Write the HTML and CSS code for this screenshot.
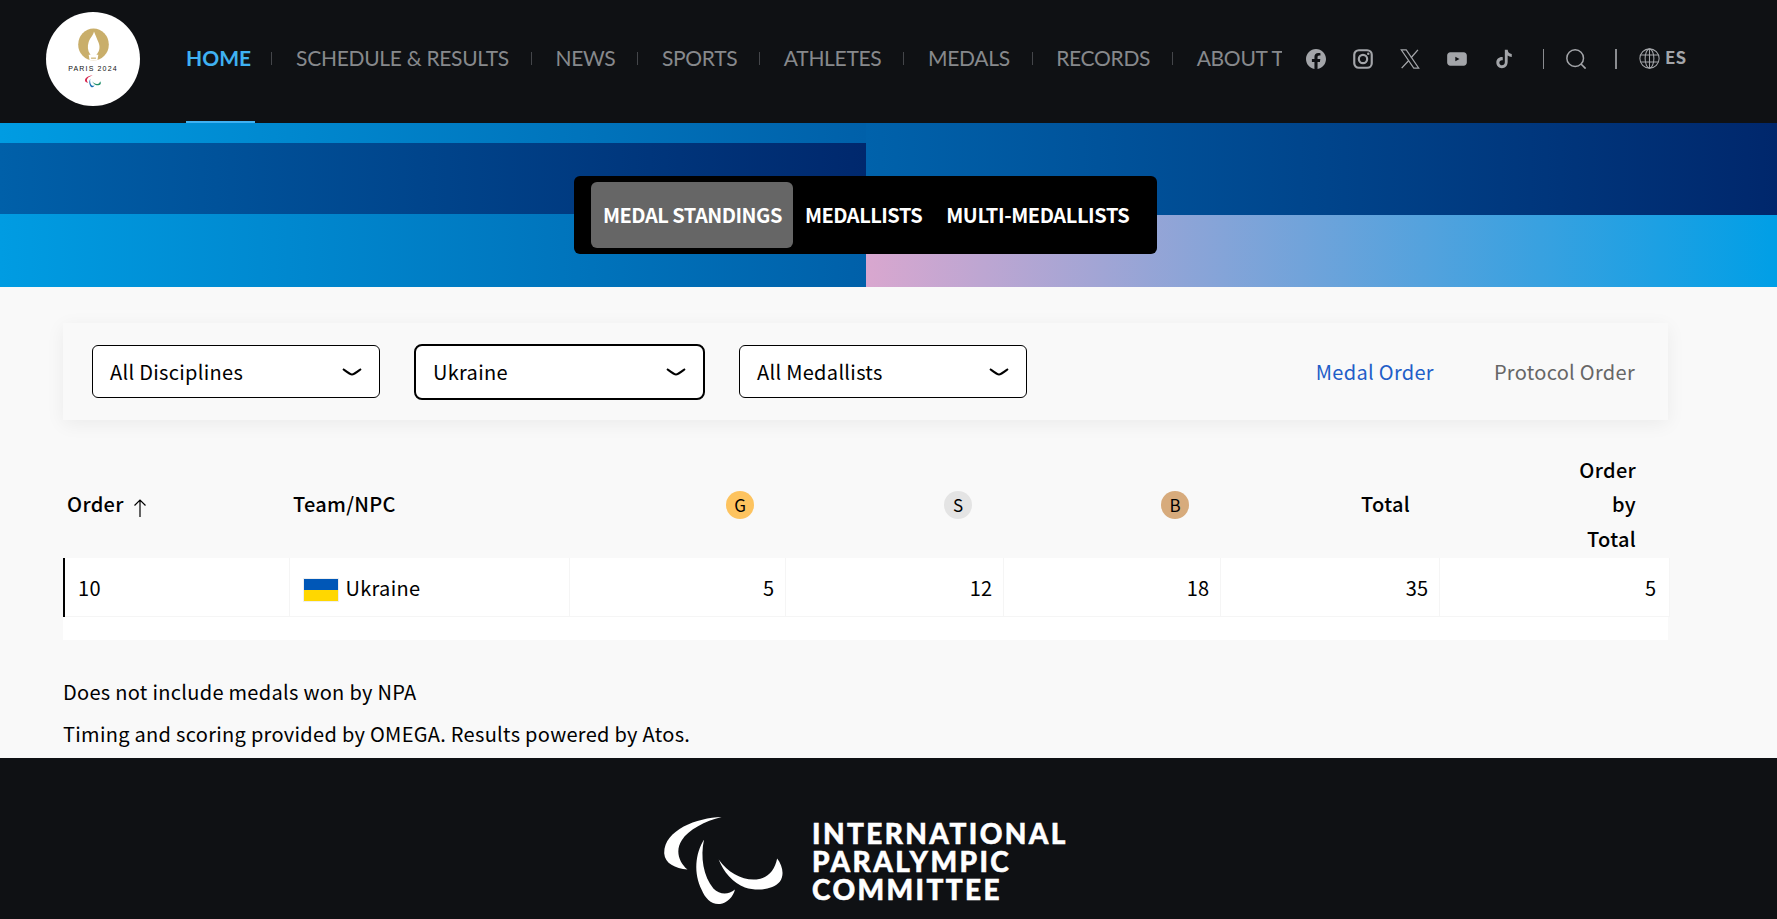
FILE: index.html
```html
<!DOCTYPE html>
<html lang="en">
<head>
<meta charset="utf-8">
<title>Medal Standings</title>
<link rel="stylesheet" href="styles.css">
</head>
<body>
<header class="topbar">
  <a class="logo">
    <svg class="logo-flame" viewBox="0 0 32 33"><ellipse cx="16" cy="16.500" rx="15.800" ry="16.500" fill="#c9ae6a"/><path fill="#fff" d="M16.500 3C16 7 12.500 9 11 14C9.500 19 10 23 12.500 26.500C14 28.500 18 28.500 19.500 26.500C22.500 23 23 18.500 21 14C19.500 10 18 7 16.500 3Z"/><path fill="#fff" d="M11 27h10l-1 6h-8Z"/><path fill="#c9ae6a" d="M13.500 30h5v1.200h-5Z"/></svg>
    <span class="logo-text">PARIS 2024</span>
    <svg class="logo-agitos" viewBox="72 80 360 265"><path fill="#d6254d" d="M245 80C170 82 70 120 72 190C74 220 105 235 142 238C115 215 105 180 125 150C145 118 195 92 245 80Z"/><path fill="#1a6fb5" d="M192 148C165 190 160 250 185 300C195 325 215 345 240 342C260 340 280 320 285 298C265 315 240 315 220 295C190 260 180 200 192 148Z"/><path fill="#1f8f6a" d="M236 208C265 250 310 272 350 268C385 264 405 240 412 205C428 225 435 255 420 275C400 298 355 305 315 292C280 280 250 245 236 208Z"/></svg>
  </a>
  <nav class="mainnav">
    <a class="navlink navlink-active">HOME</a>
    <a class="navlink">SCHEDULE &amp; RESULTS</a>
    <a class="navlink">NEWS</a>
    <a class="navlink">SPORTS</a>
    <a class="navlink">ATHLETES</a>
    <a class="navlink">MEDALS</a>
    <a class="navlink">RECORDS</a>
    <a class="navlink">ABOUT THE GAMES</a>
  </nav>
  <div class="tools">
    <svg class="ico" viewBox="0 0 24 24"><path fill="#a3a5a9" d="M24 12.070C24 5.400 18.630 0 12 0S0 5.400 0 12.070c0 6.030 4.390 11.020 10.130 11.930v-8.440H7.080v-3.490h3.050V9.410c0-3.020 1.790-4.690 4.530-4.690 1.310 0 2.680.24 2.680.24v2.970h-1.510c-1.490 0-1.960.93-1.960 1.880v2.260h3.330l-.53 3.490h-2.800V24C19.610 23.090 24 18.100 24 12.070Z"/></svg>
    <svg class="ico" viewBox="0 0 24 24"><rect x="1.500" y="1.500" width="21" height="21" rx="5.500" fill="none" stroke="#a3a5a9" stroke-width="2.600"/><circle cx="12" cy="12" r="5" fill="none" stroke="#a3a5a9" stroke-width="2.600"/><circle cx="18.300" cy="5.700" r="1.500" fill="#a3a5a9"/></svg>
    <svg class="ico" viewBox="0 0 24 24"><path fill="none" stroke="#a3a5a9" stroke-width="1.400" d="M1.500 1h6l15 22h-6Z"/><path fill="none" stroke="#a3a5a9" stroke-width="1.600" d="M21.500 1 13.300 10.500M10.500 13.800 2 23"/></svg>
    <svg class="ico" viewBox="0 0 24 24"><path fill="#a3a5a9" d="M4 4h16c2.200 0 3.800 1.600 3.800 3.800v8.400c0 2.200-1.600 3.800-3.800 3.800H4c-2.200 0-3.800-1.600-3.800-3.800V7.800C.2 5.600 1.800 4 4 4Z"/><path fill="#0f1114" d="m10 9.300 5 2.700-5 2.700Z"/></svg>
    <svg class="ico" viewBox="0 0 24 24"><path fill="#a3a5a9" d="M13 1h3.400c.3 3 2 4.800 4.900 5v3.500c-1.900 0-3.500-.6-4.900-1.600v7.700c0 4.600-3.100 7.400-6.900 7.400-3.700 0-6.700-2.900-6.700-6.700 0-4.100 3.500-7.100 7.700-6.500v3.700c-2.200-.5-4.100.8-4.100 2.900 0 1.800 1.400 3.100 3.100 3.100 1.900 0 3.500-1.300 3.500-3.600Z"/></svg>
    <span class="tool-sep"></span>
    <svg class="ico ico-search" viewBox="0 0 24 24"><circle cx="11" cy="11" r="10" fill="none" stroke="#a3a5a9" stroke-width="1.800"/><path stroke="#a3a5a9" stroke-width="2" d="m18 18 5.500 5.500"/></svg>
    <span class="tool-sep tool-sep-strong"></span>
    <span class="lang">
      <svg class="ico ico-globe" viewBox="0 0 24 24"><g fill="none" stroke="#a3a5a9" stroke-width="1.200"><circle cx="12" cy="12" r="11"/><ellipse cx="12" cy="12" rx="5" ry="11"/><path d="M12 1v22M2 8h20M2 16h20"/></g></svg>
      <b class="lang-code">ES</b>
    </span>
  </div>
</header>

<section class="hero">
  <div class="hero-left"><div class="hero-band"></div></div>
  <div class="hero-right"><div class="hero-right-top"></div><div class="hero-right-bottom"></div></div>
  <div class="tabs">
    <a class="tab tab-active">MEDAL STANDINGS</a>
    <a class="tab">MEDALLISTS</a>
    <a class="tab tab-multi">MULTI-MEDALLISTS</a>
  </div>
</section>

<main class="content">
  <div class="filters">
    <div class="select"><span>All Disciplines</span><svg class="chev" viewBox="0 0 20 8"><path d="M1 1C5 4 8 6.500 10 6.500S15 4 19 1"/></svg></div>
    <div class="select select-focus"><span>Ukraine</span><svg class="chev" viewBox="0 0 20 8"><path d="M1 1C5 4 8 6.500 10 6.500S15 4 19 1"/></svg></div>
    <div class="select"><span>All Medallists</span><svg class="chev" viewBox="0 0 20 8"><path d="M1 1C5 4 8 6.500 10 6.500S15 4 19 1"/></svg></div>
    <div class="order-links">
      <a class="order-link order-link-active">Medal Order</a>
      <a class="order-link">Protocol Order</a>
    </div>
  </div>

  <table class="medals">
    <thead>
      <tr>
        <th class="c-order"><span class="sort">Order <svg class="sort-arrow" viewBox="0 0 14 18"><path d="M7 18V1M1.500 6.500 7 1l5.500 5.500"/></svg></span></th>
        <th class="c-team">Team/NPC</th>
        <th class="c-num c-gold"><span class="medal medal-g">G</span></th>
        <th class="c-num c-silver"><span class="medal medal-s">S</span></th>
        <th class="c-num c-bronze"><span class="medal medal-b">B</span></th>
        <th class="c-num c-total">Total</th>
        <th class="c-num c-last">Order<br>by<br>Total</th>
      </tr>
    </thead>
    <tbody>
      <tr>
        <td class="c-order c-first">10</td>
        <td class="c-team"><span class="team"><span class="flag"></span>Ukraine</span></td>
        <td class="c-num">5</td>
        <td class="c-num">12</td>
        <td class="c-num">18</td>
        <td class="c-num">35</td>
        <td class="c-num c-end">5</td>
      </tr>
    </tbody>
  </table>
  <div class="table-foot"></div>

  <p class="note note-first">Does not include medals won by NPA</p>
  <p class="note">Timing and scoring provided by OMEGA. Results powered by Atos.</p>
</main>

<footer class="footer">
  <svg class="ipc-mark" viewBox="72 80 360 265"><path fill="#fff" d="M245 80C170 82 70 120 72 190C74 220 105 235 142 238C115 215 105 180 125 150C145 118 195 92 245 80Z"/><path fill="#fff" d="M192 148C165 190 160 250 185 300C195 325 215 345 240 342C260 340 280 320 285 298C265 315 240 315 220 295C190 260 180 200 192 148Z"/><path fill="#fff" d="M236 208C265 250 310 272 350 268C385 264 405 240 412 205C428 225 435 255 420 275C400 298 355 305 315 292C280 280 250 245 236 208Z"/></svg>
  <div class="ipc-text">INTERNATIONAL<br>PARALYMPIC<br>COMMITTEE</div>
</footer>
</body>
</html>
```

FILE: styles.css
```css
* { box-sizing: border-box; }

html, body {
  margin: 0;
  height: 919px;
  overflow: hidden;
}

body {
  background: #f9f9f9;
  color: #000;
  font-family: "Noto Sans CJK JP", "Noto Sans", sans-serif;
  font-size: 20px;
  letter-spacing: 0.300px;
}

a { color: inherit; text-decoration: none; }

/* Header */
.topbar {
  display: flex;
  align-items: flex-start;
  height: 123px;
  background: #0f1114;
}

.logo {
  flex: none;
  display: flex;
  flex-direction: column;
  align-items: center;
  width: 94px;
  height: 94px;
  margin: 12px 46px 0;
  padding-top: 16px;
  border-radius: 50%;
  background: #fff;
}

.logo-flame { width: 31px; height: 33px; flex: none; }

.logo-text {
  margin-top: 4px;
  font-family: "Liberation Sans", sans-serif;
  font-size: 7px;
  line-height: 7px;
  letter-spacing: 1.150px;
  color: #111;
  white-space: nowrap;
}

.logo-agitos { width: 16px; height: 13px; margin-top: 3px; flex: none; }

.mainnav {
  flex: none;
  display: flex;
  width: 1096px;
  height: 123px;
  overflow: hidden;
}

.navlink {
  position: relative;
  flex: none;
  height: 123px;
  margin-right: 46.500px;
  line-height: 116px;
  font-family: Lato, sans-serif;
  font-size: 21px;
  letter-spacing: -0.300px;
  color: #87898c;
  white-space: nowrap;
}

.navlink::after {
  content: "";
  position: absolute;
  top: 52px;
  right: -23px;
  width: 1px;
  height: 13px;
  background: #44464a;
}

.navlink-active {
  padding-right: 4px;
  margin-right: 41px;
  border-bottom: 2px solid #3fb1f2;
  font-weight: 700;
  letter-spacing: 0;
  color: #3fb1f2;
}

.navlink-active::after { right: -17px; }

.navlink:last-child::after { display: none; }

.tools {
  flex: none;
  display: flex;
  align-items: center;
  height: 117px;
  margin-left: 24px;
  gap: 27px;
}

.ico { flex: none; width: 20px; height: 20px; display: block; }

.ico-search { margin-left: -5px; }

.ico-globe { width: 21px; height: 21px; }

.tool-sep {
  flex: none;
  width: 1px;
  height: 20px;
  margin-left: 2px;
  background: #8a8c90;
}

.tool-sep-strong { width: 2px; }

.lang { display: flex; align-items: center; gap: 5px; margin-left: -5px; }

.lang-code {
  font-size: 17px;
  font-weight: 700;
  line-height: 20px;
  letter-spacing: 0;
  color: #a3a5a9;
  margin-top: -3px;
}

/* Banner */
.hero {
  position: relative;
  display: flex;
  height: 164px;
}

.hero-left {
  width: 866px;
  padding-top: 20px;
  background: linear-gradient(90deg, #009ce2, #0060a9);
}

.hero-band {
  height: 71px;
  background: linear-gradient(90deg, #0060a9, #00286d);
}

.hero-right {
  flex: 1;
  display: flex;
  flex-direction: column;
}

.hero-right-top {
  height: 92px;
  background: linear-gradient(90deg, #0062ab, #00276c);
}

.hero-right-bottom {
  flex: 1;
  background: linear-gradient(90deg, #d9a7cf, #009fe6);
}

.tabs {
  position: absolute;
  top: 53px;
  left: 574px;
  display: flex;
  align-items: center;
  width: 583px;
  height: 78px;
  padding-left: 17px;
  border-radius: 6px;
  background: #000;
}

.tab {
  height: 66px;
  padding: 0 11px 0 12px;
  border-radius: 6px;
  color: #fff;
  font-size: 20px;
  font-weight: 700;
  line-height: 65px;
  letter-spacing: -0.500px;
  white-space: nowrap;
}

.tab-active { background: #666; }

.tab-multi { padding-left: 13px; letter-spacing: -0.400px; }

/* Content */
.content {
  width: 1605px;
  height: 471px;
  margin-left: 63px;
  padding-top: 36px;
}

.filters {
  display: flex;
  align-items: center;
  height: 97px;
  padding-left: 29px;
  background: #f9f9f9;
  box-shadow: 0 4px 18px rgba(0, 0, 0, 0.06);
}

.select {
  display: flex;
  align-items: center;
  justify-content: space-between;
  width: 288px;
  height: 53px;
  margin-right: 34px;
  padding: 0 17px;
  border: 1px solid #000;
  border-radius: 6px;
  background: #fff;
  line-height: 24px;
}

.select-focus {
  width: 291px;
  height: 56px;
  border-width: 2px;
  border-radius: 8px;
}

.chev { width: 20px; height: 8px; flex: none; }
.chev path { fill: none; stroke: #000; stroke-width: 2; }

.order-links {
  display: flex;
  gap: 60px;
  margin-left: auto;
  padding-right: 33px;
}

.order-link { color: #666; }
.order-link-active { color: #1f5ec8; }

/* Table */
.medals {
  width: 1605px;
  margin-top: 31px;
  border-collapse: collapse;
  table-layout: fixed;
}

.medals th {
  height: 107px;
  padding: 0 31px 0 0;
  font-weight: 500;
  font-size: 20px;
  line-height: 34.500px;
  text-align: right;
  vertical-align: middle;
}

.medals th.c-order { width: 225px; padding-left: 3px; text-align: left; }
.medals th.c-team { width: 280px; padding-left: 4px; text-align: left; }
.medals th.c-gold { width: 216px; }
.medals th.c-silver { width: 218px; }
.medals th.c-bronze { width: 217px; }
.medals th.c-total { width: 219px; padding-right: 29px; }
.medals th.c-last { width: 230px; padding-right: 33px; }

.medals td {
  height: 58px;
  padding: 2px 10px 0;
  background: #fff;
  border: 1px solid #f5f5f5;
  border-top: 0;
  text-align: right;
  line-height: 30px;
}

.medals td.c-order { padding-left: 13px; text-align: left; }
.medals td.c-team { padding-left: 13px; text-align: left; }
.medals td.c-first { border-left: 2px solid #000; }
.medals td.c-end { padding-right: 12px; }

.sort { display: inline-flex; align-items: center; gap: 9px; }
.sort-arrow { width: 14px; height: 18px; margin-top: 6px; }
.sort-arrow path { fill: none; stroke: #000; stroke-width: 1.200; }

.medal {
  display: inline-flex;
  align-items: center;
  justify-content: center;
  width: 28px;
  height: 28px;
  margin-bottom: 3px;
  border-radius: 50%;
  font-size: 17px;
  font-weight: 400;
  line-height: 28px;
  letter-spacing: 0;
  vertical-align: middle;
}

.medal-g { background: #fdc35f; }
.medal-s { background: #e4e4e4; }
.medal-b { background: #d7ab7c; }

.team { display: flex; align-items: center; gap: 7px; }

.flag {
  flex: none;
  width: 36px;
  height: 24px;
  margin-top: 4px;
  border: 1px solid #eee;
  background: linear-gradient(#0057b7 50%, #ffd700 50%);
}

.table-foot { height: 23px; background: #fff; }

.note { margin: 0 0 12px; line-height: 30px; }
.note-first { margin-top: 37px; }

/* Footer */
.footer {
  display: flex;
  align-items: flex-start;
  height: 161px;
  padding: 59px 0 0 664px;
  background: #0f1114;
}

.ipc-mark { flex: none; width: 120px; height: 88px; }

.ipc-text {
  margin: 2px 0 0 28px;
  font-family: Lato, sans-serif;
  font-size: 28px;
  font-weight: 900;
  line-height: 28px;
  letter-spacing: 2.400px;
  -webkit-text-stroke: 0.500px #fff;
  color: #fff;
}
```
